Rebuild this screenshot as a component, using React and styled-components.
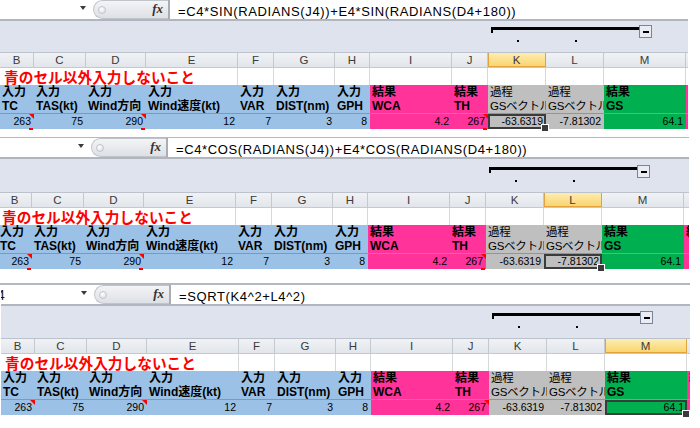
import React from 'react'
import styled, { createGlobalStyle } from 'styled-components'

const FILL = { in: '#9bc2e6', out: '#ff3399', mid: '#bfbfbf', gs: '#00b050' }

const COLS = [
  { id: 'B', w: 34, kind: 'in', top: '入力', sub: 'TC', val: '263', note: true },
  { id: 'C', w: 52, kind: 'in', top: '入力', sub: 'TAS(kt)', val: '75' },
  { id: 'D', w: 60, kind: 'in', top: '入力', sub: 'Wind方向', val: '290', note: true },
  { id: 'E', w: 92, kind: 'in', top: '入力', sub: 'Wind速度(kt)', val: '12' },
  { id: 'F', w: 36, kind: 'in', top: '入力', sub: 'VAR', val: '7' },
  { id: 'G', w: 61, kind: 'in', top: '入力', sub: 'DIST(nm)', val: '3' },
  { id: 'H', w: 35, kind: 'in', top: '入力', sub: 'GPH', val: '8' },
  { id: 'I', w: 82, kind: 'out', top: '結果', sub: 'WCA', val: '4.2' },
  { id: 'J', w: 36, kind: 'out', top: '結果', sub: 'TH', val: '267', note: true },
  { id: 'K', w: 58, kind: 'mid', top: '過程', sub: 'GSベクトル', val: '-63.6319' },
  { id: 'L', w: 58, kind: 'mid', top: '過程', sub: 'GSベクトル', val: '-7.81302' },
  { id: 'M', w: 82, kind: 'gs', top: '結果', sub: 'GS', val: '64.1' },
  { id: 'N', w: 60, kind: 'out', top: '結果', sub: '', val: '' },
]

const TEMPLATE = COLS.map(c => c.w + 'px').join(' ')

// x where column K starts / M centre, for the outline bracket
const colStart = id => COLS.slice(0, COLS.findIndex(c => c.id === id)).reduce((s, c) => s + c.w, 0)
const K_X = colStart('K')
const L_X = colStart('L')
const M_X = colStart('M')

const PANELS = [
  { formula: '=C4*SIN(RADIANS(J4))+E4*SIN(RADIANS(D4+180))', active: 'K', offset: 0, width: 688, top: 0, band: 31, tail: 8, dash: true },
  { formula: '=C4*COS(RADIANS(J4))+E4*COS(RADIANS(D4+180))', active: 'L', offset: -2, width: 689, top: 1, band: 33, tail: 14, dash: true },
  { formula: '=SQRT(K4^2+L4^2)', active: 'M', offset: 1, width: 690, top: 2, band: 32, tail: 13, dash: false, name: '4' },
]

const GlobalStyle = createGlobalStyle`
  html, body { margin: 0; padding: 0; background: #fff; }
  body { font-family: "Liberation Sans", "Noto Sans CJK JP", sans-serif; }
  * { box-sizing: border-box; }
`

const Page = styled.div`
  width: 700px;
  height: 428px;
  overflow: hidden;
  background: #fff;
  display: flex;
  flex-direction: column;
`

const Panel = styled.section`
  flex: none;
  width: ${p => p.$w}px;
  overflow: hidden;
  border-top: ${p => p.$top}px solid #b4b9c1;
`

const Inner = styled.div`
  margin-left: ${p => p.$offset}px;
  width: 780px;
`

const FormulaBar = styled.div`
  display: flex;
  height: 21px;
  background: #fff;
  border-bottom: 2px solid #b1b6be;
`

const NameBox = styled.div`
  width: 88px;
  display: flex;
  align-items: center;
  justify-content: space-between;
  padding-right: 2px;
  font-size: 14px;
  color: #111;
  overflow: hidden;
`

const NameText = styled.span`
  margin-left: -4px;
`

const Caret = styled.span`
  width: 0;
  height: 0;
  margin-top: -3px;
  margin-left: auto;
  border-left: 3px solid transparent;
  border-right: 3px solid transparent;
  border-top: 4px solid #3a3a3a;
`

const Splitter = styled.div`
  width: 75px;
  margin-left: 5px;
  display: flex;
  align-items: center;
  justify-content: space-between;
  padding: 0 5px 0 4px;
  border: 1px solid #c0c4cb;
  border-right: none;
  border-radius: 10px 0 0 10px;
  background: linear-gradient(#f3f4f6, #dde0e5);
`

const Grip = styled.span`
  width: 8px;
  height: 8px;
  border-radius: 50%;
  border: 1px solid #c2c6cd;
  background: radial-gradient(circle at 40% 35%, #fff, #d6d9df);
`

const Fx = styled.span`
  font-family: "Liberation Serif", serif;
  font-style: italic;
  font-weight: bold;
  font-size: 13px;
  color: #333;
  margin-top: -2px;
`

const Divider = styled.span`
  width: 2px;
  background: #a9aeb6;
`

const FormulaText = styled.div`
  flex: 1;
  padding: 2px 0 0 8px;
  font-size: 13px;
  letter-spacing: 0.62px;
  line-height: 19px;
  color: #000;
  white-space: nowrap;
`

const Band = styled.div`
  height: ${p => p.$h}px;
  background: #dfe3ee;
  display: flex;
  flex-direction: column;
  justify-content: flex-end;
`

const Row = styled.div`
  display: grid;
  grid-template-columns: ${TEMPLATE};
  height: ${p => p.$h}px;
`

const HeadRow = styled(Row)`
  border-top: 1px solid #bcc2cb;
  border-bottom: 1px solid #c4c9d0;
`

const ColHead = styled.div`
  display: flex;
  align-items: center;
  justify-content: center;
  font-size: 11.5px;
  color: #3a3a3a;
  border-right: 1px solid ${p => (p.$active ? '#e2a33c' : '#c4c8cf')};
  background: ${p => (p.$active ? 'linear-gradient(#fdedb2, #f9d36a)' : 'linear-gradient(#f0f2f5, #e2e5ea)')};
  box-shadow: ${p => (p.$active ? 'inset 1px 0 0 #e2a33c, inset 0 -1px 0 #e2a33c' : 'none')};
`

const TitleCell = styled.div`
  border-right: ${p => (p.$grid ? '1px solid #d6d8db' : 'none')};
  white-space: nowrap;
  overflow: visible;
`

const Title = styled.span`
  display: block;
  padding: 0 0 0 4px;
  font-family: "Noto Sans CJK JP", sans-serif;
  font-weight: bold;
  font-size: 14.7px;
  line-height: 17px;
  color: #ff0000;
`

const LabelCell = styled.div`
  background: ${p => FILL[p.$kind]};
  padding: 0 2px;
  font-size: ${p => (p.$kind === 'mid' ? '11.5px' : '12px')};
  letter-spacing: ${p => (p.$kind === 'mid' ? '-0.3px' : '0')};
  line-height: 14px;
  font-weight: ${p => (p.$kind === 'mid' ? 'normal' : 'bold')};
  color: #000;
  white-space: nowrap;
  overflow: hidden;
`

const DataRow = styled(Row)`
  border-top: 1px solid rgba(0, 0, 0, 0.42);
`

const DataCell = styled.div`
  position: relative;
  background: ${p => FILL[p.$kind]};
  padding-right: 3px;
  text-align: right;
  font-size: 10.5px;
  line-height: 15px;
  color: #000;
  z-index: ${p => (p.$sel ? 2 : 'auto')};
  box-shadow: ${p => (p.$sel ? 'inset 0 0 0 2px #3b3b3b' : 'none')};

  &::after {
    content: '';
    display: ${p => (p.$sel ? 'block' : 'none')};
    position: absolute;
    right: -3px;
    bottom: -3px;
    width: 6px;
    height: 6px;
    background: #3b3b3b;
    border: 1px solid #fff;
  }
`

const Note = styled.span`
  position: absolute;
  top: 0;
  right: 0;
  border-top: 5px solid #ff0000;
  border-left: 5px solid transparent;
`

const Dash = styled.span`
  position: absolute;
  right: 1px;
  bottom: -1px;
  width: 4px;
  height: 2px;
  background: #ff0000;
`

const Tail = styled.div`
  height: ${p => p.$h}px;
  background: #fff;
`

const OutlineBracket = () => (
  <svg width="780" height="28" style={{ display: 'block' }}>
    <rect x={K_X + 3} y="3" width={M_X + 35 - K_X - 3} height="3" fill="#000" />
    <rect x={K_X + 3} y="3" width="2" height="6" fill="#000" />
    <rect x={K_X + 29} y="16" width="2" height="2" fill="#000" />
    <rect x={L_X + 29} y="16" width="2" height="2" fill="#000" />
    <rect x={M_X + 35.5} y="1.5" width="12" height="12" fill="#e9ecf3" stroke="#7b8494" />
    <rect x={M_X + 39} y="7" width="6" height="2" fill="#000" />
  </svg>
)

const Sheet = ({ formula, active, offset, width, top, band, tail, dash, name }) => (
  <Panel $w={width} $top={top}>
    <Inner $offset={offset}>
      <FormulaBar>
        <NameBox>
          {name && <NameText>{name}</NameText>}
          <Caret />
        </NameBox>
        <Splitter>
          <Grip />
          <Fx>fx</Fx>
        </Splitter>
        <Divider />
        <FormulaText>{formula}</FormulaText>
      </FormulaBar>

      <Band $h={band}>
        <OutlineBracket />
      </Band>

      <HeadRow $h={16}>
        {COLS.map(c => (
          <ColHead key={c.id} $active={c.id === active}>{c.id}</ColHead>
        ))}
      </HeadRow>

      <Row $h={17}>
        {COLS.map((c, i) => (
          <TitleCell key={c.id} $grid={i >= 3}>
            {i === 0 && <Title>青のセル以外入力しないこと</Title>}
          </TitleCell>
        ))}
      </Row>

      <Row $h={28}>
        {COLS.map(c => (
          <LabelCell key={c.id} $kind={c.kind}>
            {c.top}
            <br />
            {c.sub}
          </LabelCell>
        ))}
      </Row>

      <DataRow $h={16}>
        {COLS.map(c => (
          <DataCell key={c.id} $kind={c.kind} $sel={c.id === active}>
            {c.val}
            {c.note && <Note />}
            {c.note && dash && <Dash />}
          </DataCell>
        ))}
      </DataRow>

      <Tail $h={tail} />
    </Inner>
  </Panel>
)

export default function App() {
  return (
    <>
      <GlobalStyle />
      <Page>
        {PANELS.map((p, i) => (
          <Sheet key={i} {...p} />
        ))}
      </Page>
    </>
  )
}
